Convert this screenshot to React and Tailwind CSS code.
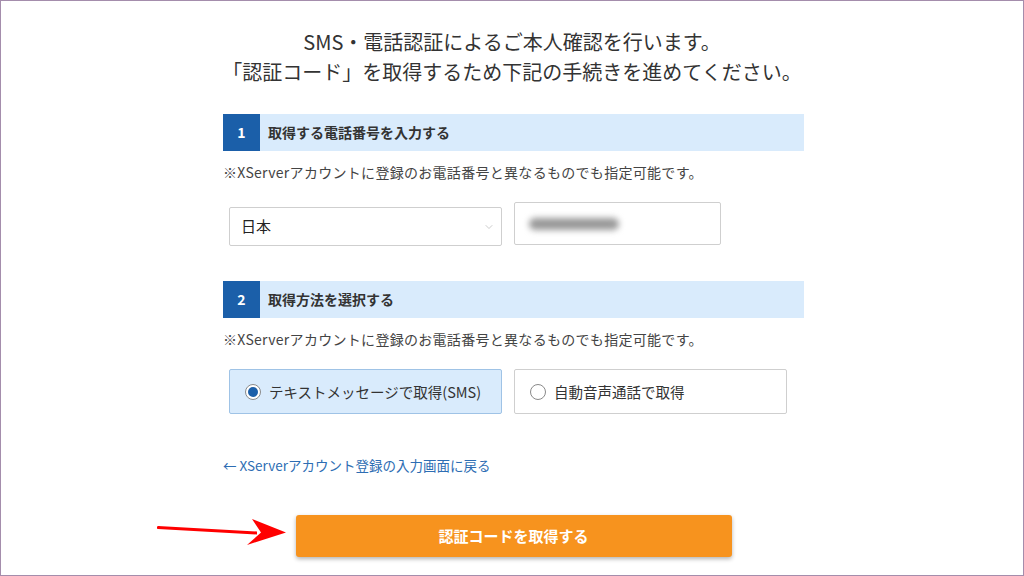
import { ChevronDown } from 'lucide-react';

const font = { fontFamily: '"Noto Sans CJK JP", "Noto Sans", sans-serif' };

function StepHeader({ num, title }) {
  return (
    <div className="flex h-[37px] bg-[#d9ebfc]">
      <div className="w-[37px] flex items-center justify-center bg-[#1b5fa9] text-white text-[14px] font-bold">
        {num}
      </div>
      <div className="flex items-center pl-[8px] text-[14px] font-bold text-[#333]">{title}</div>
    </div>
  );
}

function Note() {
  return (
    <p className="text-[14px] leading-[20px] text-[#444] tracking-[0.3px]">
      ※XServerアカウントに登録のお電話番号と異なるものでも指定可能です。
    </p>
  );
}

function Radio({ checked, label }) {
  return (
    <div
      className={`w-[273px] h-[45px] flex items-center gap-[8px] pl-[15px] rounded-[2px] border ${
        checked ? 'bg-[#d9ebfc] border-[#9fc3e6]' : 'bg-white border-[#cfcfcf]'
      }`}
    >
      <span className="w-[16px] h-[16px] rounded-full border border-[#8a8a8a] bg-white flex items-center justify-center">
        {checked && <span className="w-[10px] h-[10px] rounded-full bg-[#1b5fa9]" />}
      </span>
      <span className="text-[14.5px] text-[#333]">{label}</span>
    </div>
  );
}

export default function App() {
  return (
    <div style={font} className="w-[1024px] h-[576px] bg-white border border-[#a48dac] overflow-hidden">
      <div className="pt-[26px] text-center text-[20px] leading-[30px] text-[#333]">
        <p>SMS・電話認証によるご本人確認を行います。</p>
        <p>「認証コード」を取得するため下記の手続きを進めてください。</p>
      </div>

      <div className="ml-[222px] w-[581px] mt-[27px]">
        <StepHeader num="1" title="取得する電話番号を入力する" />
        <div className="mt-[11px]">
          <Note />
        </div>
        <div className="mt-[20px] flex items-start gap-[12px] pl-[6px]">
          <div className="mt-[5px] w-[273px] h-[39px] border border-[#cfcfcf] rounded-[2px] flex items-center justify-between pl-[11px] pr-[6px]">
            <span className="text-[15px] text-[#222]">日本</span>
            <ChevronDown size={12} strokeWidth={1.2} className="text-[#aaa]" />
          </div>
          <div className="w-[207px] h-[43px] border border-[#cfcfcf] rounded-[2px] flex items-center pl-[14px]">
            <div className="w-[90px] h-[12px] rounded-full bg-[#999] blur-[3px]" />
          </div>
        </div>

        <div className="mt-[35px]">
          <StepHeader num="2" title="取得方法を選択する" />
        </div>
        <div className="mt-[11px]">
          <Note />
        </div>
        <div className="mt-[20px] flex gap-[12px] pl-[6px]">
          <Radio checked label="テキストメッセージで取得(SMS)" />
          <Radio label="自動音声通話で取得" />
        </div>

        <p className="mt-[41px] text-[13.5px] leading-[20px] text-[#2d6db3]">← XServerアカウント登録の入力画面に戻る</p>

        <div className="relative mt-[40px]">
          <svg className="absolute left-[-66px] top-[2px]" width="135" height="32" viewBox="0 0 135 32">
            <path d="M1 9 L100 14.5 L100 17.5 L1 12 Z" fill="#ff0000" />
            <circle cx="1.5" cy="10.5" r="1.6" fill="#ff0000" />
            <polygon points="95,2 129,15.5 90,28 104,15.5" fill="#ff0000" />
          </svg>
          <div className="mx-auto w-[436px] h-[42px] rounded-[3px] bg-[#f7931e] shadow-[0_2px_4px_rgba(0,0,0,0.3)] flex items-center justify-center text-white text-[15px] font-bold">
            認証コードを取得する
          </div>
        </div>
      </div>
    </div>
  );
}
